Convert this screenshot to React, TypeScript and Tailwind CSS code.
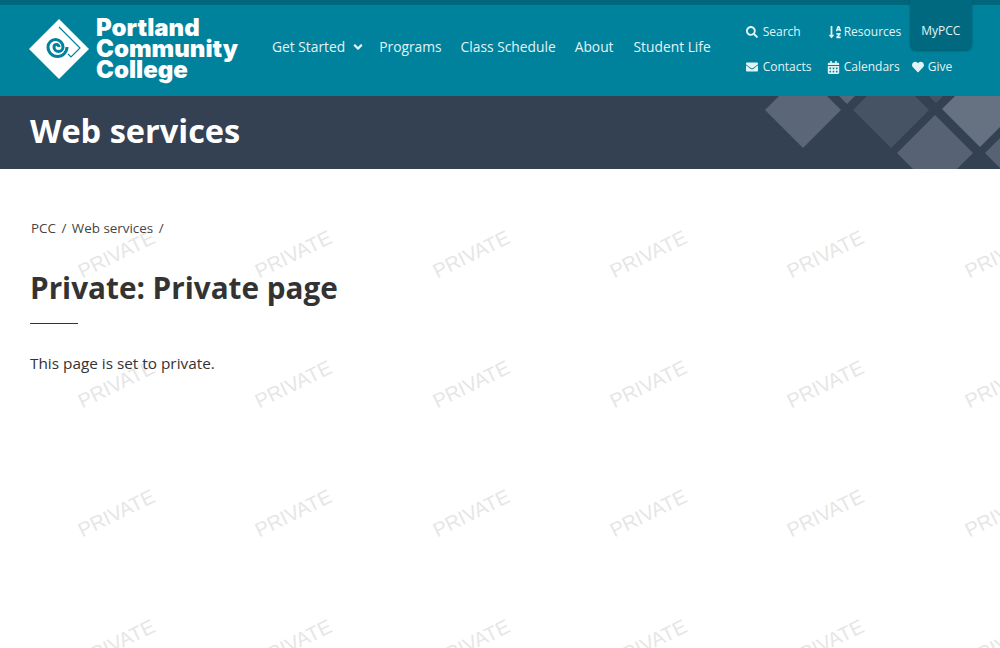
import { FaSearch, FaSortAlphaDown, FaEnvelope, FaCalendarAlt, FaHeart, FaAngleDown } from "react-icons/fa";

const mainNav = [
  { label: "Programs", className: "ml-[14px]" },
  { label: "Class Schedule", className: "ml-[19px]" },
  { label: "About", className: "ml-[19px]" },
  { label: "Student Life", className: "ml-[20px]" },
];

function Logo() {
  return (
    <svg width="62" height="62" viewBox="0 0 62 62" className="shrink-0">
      <path d="M31 1 L61 31 L31 61 L1 31 Z" fill="#fff" />
      <path
        d="M31 29 A2.5 2.5 0 0 0 26 29 A4.5 4.5 0 0 0 35 29 A7.5 7.5 0 0 0 20 29 A9.5 9.5 0 0 0 39 29"
        fill="none"
        stroke="#00829c"
        strokeWidth="3"
      />
      <path d="M31 9 L52 30 L43 39 L40 36" fill="none" stroke="#00829c" strokeWidth="1.2" />
    </svg>
  );
}

function TopLink({ icon, label, className }: { icon?: React.ReactNode; label: string; className: string }) {
  return (
    <a className={`flex items-center text-[12px] leading-[18px] text-[#e4f3f6] ${className}`}>
      {icon}
      {label}
    </a>
  );
}

function Watermarks() {
  const cells = Array.from({ length: 24 });
  return (
    <div className="pointer-events-none absolute left-[27.5px] top-[189px] z-0 grid grid-cols-[repeat(6,177.4px)] grid-rows-[repeat(4,129.7px)]">
      {cells.map((_, i) => (
        <div key={i} className="flex items-center justify-center">
          <span className="-rotate-[26deg] whitespace-nowrap font-['Liberation_Sans',sans-serif] text-[20px] text-[#e6e6e6]">
            PRIVATE
          </span>
        </div>
      ))}
    </div>
  );
}

export default function App() {
  return (
    <div className="relative h-[648px] w-[1000px] overflow-hidden bg-white font-['Open_Sans',sans-serif]">
      <header className="relative z-10 h-[96px] border-t-[5px] border-[#00667c] bg-[#00829c] shadow-[0_1px_3px_rgba(0,0,0,0.4)]">
        <div className="flex h-full items-start">
          <div className="ml-[28px] mt-[12px] flex w-[210px] items-center">
            <Logo />
            <div className="ml-[6px] whitespace-nowrap font-['Inter',sans-serif] text-[24px] font-black leading-[21px] text-white">
              <div>Portland</div>
              <div>Community</div>
              <div>College</div>
            </div>
          </div>

          <nav className="ml-[34px] mt-[32px] flex items-center text-[13.8px] text-[#e4f3f6]">
            <a className="flex items-center">
              Get Started
              <FaAngleDown className="ml-[6px] text-[14px]" />
            </a>
            {mainNav.map((n) => (
              <a key={n.label} className={n.className}>
                {n.label}
              </a>
            ))}
          </nav>

          <div className="ml-[35px] h-full flex-1">
            <div className="flex h-[45px] items-start">
              <TopLink
                className="mt-[18px] w-[82px]"
                icon={<FaSearch className="mr-[5px] text-[12px]" />}
                label="Search"
              />
              <TopLink
                className="mt-[18px] w-[82px]"
                icon={<FaSortAlphaDown className="mr-[2px] text-[14px]" />}
                label="Resources"
              />
              <a className="mt-[-5px] flex h-[50px] w-[62px] items-center justify-center rounded-b-[6px] bg-[#00697f] pt-[12px] text-[12px] text-[#e4f3f6] shadow-[0_1px_2px_rgba(0,0,0,0.3)]">
                MyPCC
              </a>
            </div>
            <div className="mt-[8px] flex items-start">
              <TopLink
                className="w-[81px]"
                icon={<FaEnvelope className="mr-[5px] text-[12px]" />}
                label="Contacts"
              />
              <TopLink
                className="w-[85px]"
                icon={<FaCalendarAlt className="mr-[4px] text-[13px]" />}
                label="Calendars"
              />
              <TopLink icon={<FaHeart className="mr-[4px] text-[12px]" />} className="" label="Give" />
            </div>
          </div>
        </div>
      </header>

      <section className="relative z-10 flex h-[73px] items-center overflow-hidden bg-[#344153] pb-[2px] pl-[30px]">
        <h2 className="text-[32.5px] font-bold text-white">Web services</h2>
        <svg className="absolute left-[760px] top-0" width="240" height="73" viewBox="760 96 240 73">
          <path d="M765 110 L803 72 L841 110 L803 148 Z" fill="#5b6778" />
          <path d="M839 96 L855 96 L847 104 Z" fill="#5b6778" />
          <path d="M853 110 L891 72 L929 110 L891 148 Z" fill="#465364" />
          <path d="M929 96 L943 96 L936 103 Z" fill="#465364" />
          <path d="M942 109 L980 71 L1018 109 L980 147 Z" fill="#667282" />
          <path d="M897 153 L935 115 L973 153 L935 191 Z" fill="#576374" />
          <path d="M985 153 L1023 115 L1061 153 L1023 191 Z" fill="#576374" />
        </svg>
      </section>

      <main className="relative z-10 px-[30px] pt-[49px] text-[#333]">
        <div className="ml-[1px] flex gap-[5.5px] text-[13.4px] leading-[20px] text-[#444]">
          <span>PCC</span>
          <span>/</span>
          <span>Web services</span>
          <span>/</span>
        </div>
        <h1 className="mt-[30px] text-[29.7px] font-bold leading-[40px] text-[#333]">Private: Private page</h1>
        <div className="mt-[15px] h-px w-[48px] bg-[#333]" />
        <p className="mt-[27px] text-[15.33px] leading-[24px] text-[#333]">This page is set to private.</p>
      </main>

      <Watermarks />
    </div>
  );
}
